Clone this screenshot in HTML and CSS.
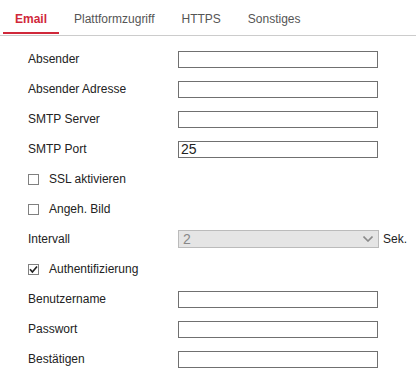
FILE: index.html
```html
<!DOCTYPE html>
<html>
<head>
    <title>Email</title>
    <meta charset="utf-8">
    <link rel="stylesheet" href="styles.css">
</head>
<body>
    <div class="tabs">
        <div class="tab active">Email</div>
        <div class="tab">Plattformzugriff</div>
        <div class="tab">HTTPS</div>
        <div class="tab">Sonstiges</div>
    </div>
    <div class="form">
        <div class="row">
            <label class="lbl">Absender</label>
            <input type="text" class="txt">
        </div>
        <div class="row">
            <label class="lbl">Absender Adresse</label>
            <input type="text" class="txt">
        </div>
        <div class="row">
            <label class="lbl">SMTP Server</label>
            <input type="text" class="txt">
        </div>
        <div class="row">
            <label class="lbl">SMTP Port</label>
            <input type="text" class="txt" value="25">
        </div>
        <div class="row">
            <label class="check"><span class="box"></span>SSL aktivieren</label>
        </div>
        <div class="row">
            <label class="check"><span class="box"></span>Angeh. Bild</label>
        </div>
        <div class="row">
            <label class="lbl">Intervall</label>
            <div class="select">
                <span>2</span>
                <svg width="10" height="6" viewBox="0 0 10 6"><path d="M0.5 0.5 L5 5 L9.5 0.5" fill="none" stroke="#8a8a8a" stroke-width="1.6"/></svg>
            </div>
            <span class="unit">Sek.</span>
        </div>
        <div class="row">
            <label class="check"><span class="box"><svg width="9" height="9" viewBox="0 0 9 9"><path d="M1 4.2 L3.4 7 L8 1.5" fill="none" stroke="#222" stroke-width="1.7"/></svg></span>Authentifizierung</label>
        </div>
        <div class="row">
            <label class="lbl">Benutzername</label>
            <input type="text" class="txt">
        </div>
        <div class="row">
            <label class="lbl">Passwort</label>
            <input type="password" class="txt">
        </div>
        <div class="row">
            <label class="lbl">Bestätigen</label>
            <input type="password" class="txt">
        </div>
    </div>
</body>
</html>
```
FILE: styles.css
```css
*{
    padding: 0;
    margin: 0;
    box-sizing: border-box;
}
body{
    background: #ffffff;
    font-family: 'Liberation Sans', Arial, sans-serif;
    font-size: 12px;
    color: #222222;
}
.tabs{
    display: flex;
    padding-left: 3px;
    border-bottom: 1px solid #cccccc;
    margin-right: 1px;
}
.tab{
    padding: 12px 12px 0 12px;
    height: 34px;
    line-height: 14px;
    margin-right: 3px;
    color: #555555;
    border-bottom: 2px solid transparent;
    margin-bottom: 1px;
}
.tab.active{
    color: #d0283a;
    font-weight: 700;
    border-bottom-color: #d0283a;
}
.form{
    padding-top: 8px;
}
.row{
    display: flex;
    align-items: center;
    height: 30px;
    padding-left: 28px;
}
.lbl{
    width: 150px;
}
.txt{
    width: 200px;
    height: 17px;
    border: 1px solid #707070;
    padding: 0 2px;
    font-family: 'Liberation Sans', Arial, sans-serif;
    font-size: 14px;
    color: #222222;
    outline: none;
}
.check{
    display: flex;
    align-items: center;
}
.box{
    width: 11px;
    height: 11px;
    border: 1px solid #808080;
    margin-right: 10px;
    display: flex;
    align-items: center;
    justify-content: center;
}
.select{
    width: 201px;
    height: 18px;
    border: 1px solid #bbbbbb;
    background: #e5e5e5;
    color: #888888;
    font-size: 14px;
    display: flex;
    align-items: center;
    justify-content: space-between;
    padding: 0 5px 0 4px;
}
.unit{
    margin-left: 4px;
}
```
